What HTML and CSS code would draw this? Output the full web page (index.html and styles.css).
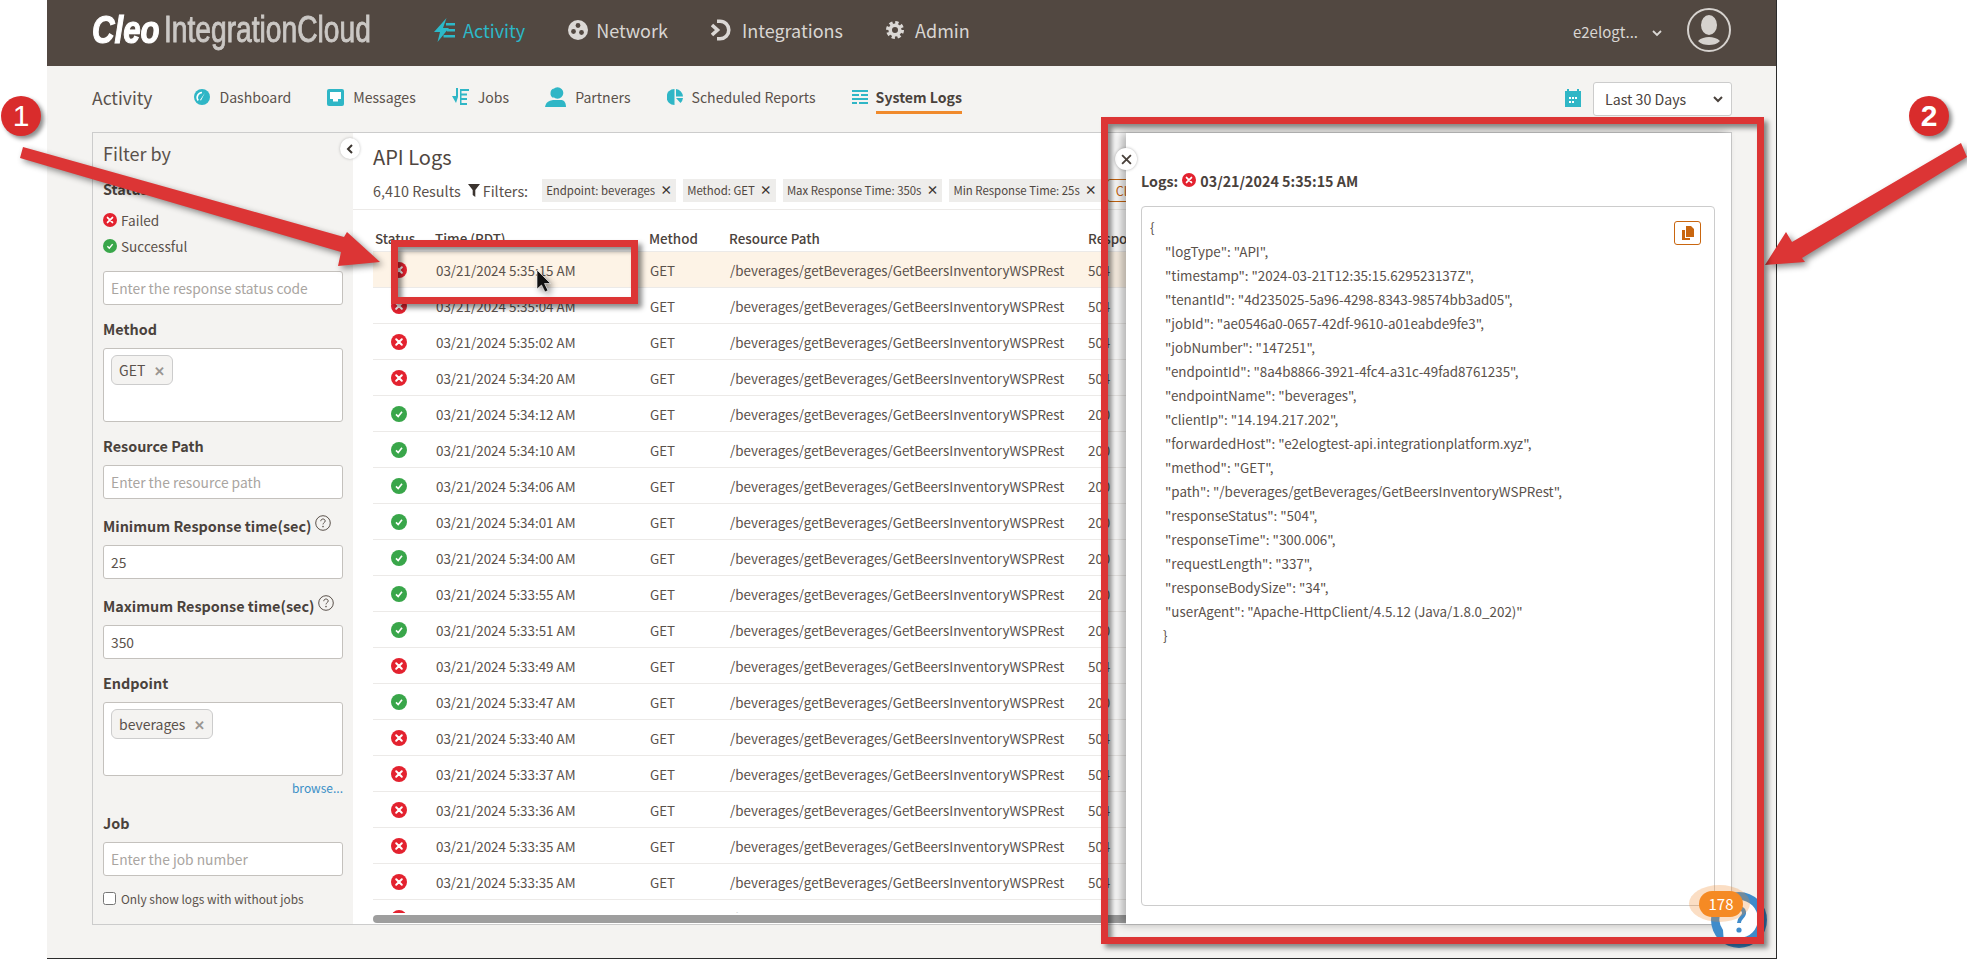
FILE: index.html
```html
<!DOCTYPE html>
<html lang="en">
<head>
<meta charset="utf-8">
<title>Cleo Integration Cloud - System Logs</title>
<link rel="stylesheet" href="styles.css">
</head>
<body>
<svg class="defs" aria-hidden="true">
  <symbol id="i-fail" viewBox="0 0 16 16"><circle cx="8" cy="8" r="8" fill="#e3222f"/><path d="M5.2 5.2l5.6 5.6M10.8 5.2l-5.6 5.6" stroke="#fff" stroke-width="2" stroke-linecap="round"/></symbol>
  <symbol id="i-ok" viewBox="0 0 16 16"><circle cx="8" cy="8" r="8" fill="#39a64a"/><path d="M5 8.4l2.2 2.2L11 5.8" fill="none" stroke="#fff" stroke-width="1.6"/></symbol>
  <symbol id="i-help" viewBox="0 0 16 16"><circle cx="8" cy="8" r="7.3" fill="none" stroke="#5a514b" stroke-width="1"/><path d="M5.8 6.2c0-1.5 1-2.2 2.2-2.2s2.2.8 2.2 2c0 1.6-2.2 1.7-2.2 3.4" fill="none" stroke="#5a514b" stroke-width="1"/><circle cx="8" cy="11.6" r=".8" fill="#5a514b"/></symbol>
</svg>

<div class="page">
  <header class="topbar">
    <div class="logo"><span class="logo-cleo">Cleo</span><span class="logo-ic">IntegrationCloud</span></div>
    <nav class="mainnav">
      <a class="mainnav-item active"><svg width="21" height="24" viewBox="0 0 21 24"><path fill="#2cb9c9" d="M12.500 0L0 14h6L3.500 24 15 10H9z"/><path fill="#2cb9c9" d="M12 5h9v2.400h-9zM13 11h8v2.400h-8zM9.500 17H21v2.400H9.500z"/></svg>Activity</a>
      <a class="mainnav-item"><svg width="20" height="24" viewBox="0 0 20 24"><circle cx="10" cy="12" r="10" fill="#dbd8d5"/><circle cx="10" cy="7.500" r="2.400" fill="#524841"/><circle cx="5.500" cy="13.500" r="2.400" fill="#524841"/><circle cx="13.500" cy="14.500" r="2.400" fill="#524841"/></svg>Network</a>
      <a class="mainnav-item gap-wide"><svg width="20" height="24" viewBox="0 0 20 24" fill="none" stroke="#dbd8d5" stroke-width="3.600"><path d="M1 7l5.500 5L1 17"/><path d="M6 3.200h3a8.800 8.800 0 0 1 0 17.600H6"/></svg>Integrations</a>
      <a class="mainnav-item gap-mid"><svg width="18" height="24" viewBox="0 0 18 24" fill="none" stroke="#dbd8d5"><circle cx="9" cy="12" r="7.500" stroke-width="3" stroke-dasharray="3.300 2.590"/><circle cx="9" cy="12" r="4.800" stroke-width="3.600"/></svg>Admin</a>
    </nav>
    <div class="userbox">
      <span class="username">e2elogt...</span>
      <svg class="chev" width="10" height="7" viewBox="0 0 10 7" fill="none" stroke="#dbd8d5" stroke-width="1.800"><path d="M1 1l4 4 4-4"/></svg>
      <span class="avatar"><svg width="26" height="32" viewBox="0 0 26 32"><ellipse cx="13" cy="11" rx="8" ry="10" fill="#d6d2ce"/><path fill="#d6d2ce" d="M2 27c3-3 7-4 11-4s8 1 11 4c-3 3-7 4-11 4s-8-1-11-4z"/></svg></span>
    </div>
  </header>

  <div class="subnav">
    <span class="subnav-title">Activity</span>
    <a class="subnav-item"><svg width="16" height="18" viewBox="0 0 16 16"><circle cx="8" cy="8" r="8" fill="#2fb6c6"/><path d="M4.200 11.500A5 5 0 0 1 8 3.500" fill="none" stroke="#fff" stroke-width="1.600"/><path d="M10.800 4L7 11.500l-1-.6z" fill="#fff"/></svg>Dashboard</a>
    <a class="subnav-item"><svg width="17" height="17" viewBox="0 0 17 17"><rect width="17" height="17" rx="2" fill="#2fb6c6"/><path fill="#fff" d="M3 3h11v7h-3v2.500H6V10H3z"/></svg>Messages</a>
    <a class="subnav-item"><svg width="17" height="18" viewBox="0 0 17 18" fill="#2fb6c6"><path d="M4 0h2v9l-2 6-4-7h4zM8 1h9v2H9.500v2.500H15v2H9.500V10H15v2H9.500v3H15v2H8z"/></svg>Jobs</a>
    <a class="subnav-item"><svg width="21" height="20" viewBox="0 0 21 20" fill="#2fb6c6"><circle cx="12.500" cy="6" r="5.800"/><path d="M5.500 6a5 5 0 0 1 3-4.500V11a5 5 0 0 1-3-5zM0 20c.5-3 2-5.500 5-6.300l3-.7h9l2 1c1.300 1.300 2 3.500 2 6z"/></svg>Partners</a>
    <a class="subnav-item"><svg width="16" height="18" viewBox="0 0 16 18" fill="#2fb6c6"><path d="M7.500 1A8 8 0 0 0 7.500 17z"/><path d="M9 1a8 8 0 0 1 7 7.500H9zM9 10h7a8 8 0 0 1-2.500 5z"/></svg>Scheduled Reports</a>
    <a class="subnav-item current"><svg width="16" height="15" viewBox="0 0 16 15" fill="#2fb6c6"><path d="M0 0h16v2H0zM0 4h7v2H0zM9 4h7v2H9zM0 8h16v2H0zM0 12h5v2H0zM7 12h9v2H7z"/></svg>System Logs</a>
    <div class="daterange">
      <svg class="cal" width="16" height="18" viewBox="0 0 16 18"><path fill="#2fb6c6" d="M0 2h2V0h2v2h8V0h2v2h2v16H0z"/><path fill="#fff" d="M4 8h2v2H4zM7 8h2v2H7zM10 8h2v2h-2zM4 12h2v2H4zM7 12h2v2H7z"/></svg>
      <div class="select"><span>Last 30 Days</span><svg width="10" height="7" viewBox="0 0 10 7" fill="none" stroke="#4a423c" stroke-width="2"><path d="M1 1l4 4 4-4"/></svg></div>
    </div>
  </div>

  <main class="board">
    <aside class="filters">
      <button class="collapse"><svg width="8" height="10" viewBox="0 0 8 10" fill="none" stroke="#3b342f" stroke-width="2"><path d="M6 1L2 5l4 4"/></svg></button>
      <div class="filters-title">Filter by</div>
      <div class="flabel status-label">Status</div>
      <div class="statusopt first"><svg class="ic14" viewBox="0 0 16 16"><use href="#i-fail"/></svg>Failed</div>
      <div class="statusopt"><svg class="ic14" viewBox="0 0 16 16"><use href="#i-ok"/></svg>Successful</div>
      <input class="finput status-input" placeholder="Enter the response status code">
      <div class="flabel">Method</div>
      <div class="multi"><span class="tag">GET<i class="tag-x">✕</i></span></div>
      <div class="flabel">Resource Path</div>
      <input class="finput" placeholder="Enter the resource path">
      <div class="flabel wide">Minimum Response time(sec)<svg class="helpicon" viewBox="0 0 16 16"><use href="#i-help"/></svg></div>
      <input class="finput" value="25">
      <div class="flabel wide">Maximum Response time(sec)<svg class="helpicon" viewBox="0 0 16 16"><use href="#i-help"/></svg></div>
      <input class="finput" value="350">
      <div class="flabel">Endpoint</div>
      <div class="multi"><span class="tag">beverages<i class="tag-x">✕</i></span></div>
      <a class="browse">browse...</a>
      <div class="flabel wide">Job</div>
      <input class="finput" placeholder="Enter the job number">
      <label class="onlyjobs"><input type="checkbox" class="chk">Only show logs with without jobs</label>
    </aside>

    <section class="content">
      <h1 class="content-title">API Logs</h1>
      <div class="toolbar">
        <span class="results">6,410 Results</span>
        <svg class="funnel" width="12" height="13" viewBox="0 0 12 13"><path fill="#3b342f" d="M0 0h12L7.300 6v7L4.700 11V6z"/></svg>
        <span class="results">Filters:</span>
        <span class="chip">Endpoint: beverages<b>×</b></span>
        <span class="chip">Method: GET<b>×</b></span>
        <span class="chip">Max Response Time: 350s<b>×</b></span>
        <span class="chip">Min Response Time: 25s<b>×</b></span>
        <span class="clear">Clear</span>
      </div>
      <div class="tablewrap">
        <div class="thead">
          <span class="c-status">Status</span><span class="c-time">Time (PDT)</span><span class="c-method">Method</span><span class="c-path">Resource Path</span><span class="c-resp">Response Status</span>
        </div>
        <div class="trow selected"><span class="c-status"><svg class="ic16"><use href="#i-fail"/></svg></span><span class="c-time">03/21/2024 5:35:15 AM</span><span class="c-method">GET</span><span class="c-path">/beverages/getBeverages/GetBeersInventoryWSPRest</span><span class="c-resp">504</span></div>
        <div class="trow"><span class="c-status"><svg class="ic16"><use href="#i-fail"/></svg></span><span class="c-time">03/21/2024 5:35:04 AM</span><span class="c-method">GET</span><span class="c-path">/beverages/getBeverages/GetBeersInventoryWSPRest</span><span class="c-resp">504</span></div>
        <div class="trow"><span class="c-status"><svg class="ic16"><use href="#i-fail"/></svg></span><span class="c-time">03/21/2024 5:35:02 AM</span><span class="c-method">GET</span><span class="c-path">/beverages/getBeverages/GetBeersInventoryWSPRest</span><span class="c-resp">504</span></div>
        <div class="trow"><span class="c-status"><svg class="ic16"><use href="#i-fail"/></svg></span><span class="c-time">03/21/2024 5:34:20 AM</span><span class="c-method">GET</span><span class="c-path">/beverages/getBeverages/GetBeersInventoryWSPRest</span><span class="c-resp">504</span></div>
        <div class="trow"><span class="c-status"><svg class="ic16"><use href="#i-ok"/></svg></span><span class="c-time">03/21/2024 5:34:12 AM</span><span class="c-method">GET</span><span class="c-path">/beverages/getBeverages/GetBeersInventoryWSPRest</span><span class="c-resp">200</span></div>
        <div class="trow"><span class="c-status"><svg class="ic16"><use href="#i-ok"/></svg></span><span class="c-time">03/21/2024 5:34:10 AM</span><span class="c-method">GET</span><span class="c-path">/beverages/getBeverages/GetBeersInventoryWSPRest</span><span class="c-resp">200</span></div>
        <div class="trow"><span class="c-status"><svg class="ic16"><use href="#i-ok"/></svg></span><span class="c-time">03/21/2024 5:34:06 AM</span><span class="c-method">GET</span><span class="c-path">/beverages/getBeverages/GetBeersInventoryWSPRest</span><span class="c-resp">200</span></div>
        <div class="trow"><span class="c-status"><svg class="ic16"><use href="#i-ok"/></svg></span><span class="c-time">03/21/2024 5:34:01 AM</span><span class="c-method">GET</span><span class="c-path">/beverages/getBeverages/GetBeersInventoryWSPRest</span><span class="c-resp">200</span></div>
        <div class="trow"><span class="c-status"><svg class="ic16"><use href="#i-ok"/></svg></span><span class="c-time">03/21/2024 5:34:00 AM</span><span class="c-method">GET</span><span class="c-path">/beverages/getBeverages/GetBeersInventoryWSPRest</span><span class="c-resp">200</span></div>
        <div class="trow"><span class="c-status"><svg class="ic16"><use href="#i-ok"/></svg></span><span class="c-time">03/21/2024 5:33:55 AM</span><span class="c-method">GET</span><span class="c-path">/beverages/getBeverages/GetBeersInventoryWSPRest</span><span class="c-resp">200</span></div>
        <div class="trow"><span class="c-status"><svg class="ic16"><use href="#i-ok"/></svg></span><span class="c-time">03/21/2024 5:33:51 AM</span><span class="c-method">GET</span><span class="c-path">/beverages/getBeverages/GetBeersInventoryWSPRest</span><span class="c-resp">200</span></div>
        <div class="trow"><span class="c-status"><svg class="ic16"><use href="#i-fail"/></svg></span><span class="c-time">03/21/2024 5:33:49 AM</span><span class="c-method">GET</span><span class="c-path">/beverages/getBeverages/GetBeersInventoryWSPRest</span><span class="c-resp">504</span></div>
        <div class="trow"><span class="c-status"><svg class="ic16"><use href="#i-ok"/></svg></span><span class="c-time">03/21/2024 5:33:47 AM</span><span class="c-method">GET</span><span class="c-path">/beverages/getBeverages/GetBeersInventoryWSPRest</span><span class="c-resp">200</span></div>
        <div class="trow"><span class="c-status"><svg class="ic16"><use href="#i-fail"/></svg></span><span class="c-time">03/21/2024 5:33:40 AM</span><span class="c-method">GET</span><span class="c-path">/beverages/getBeverages/GetBeersInventoryWSPRest</span><span class="c-resp">504</span></div>
        <div class="trow"><span class="c-status"><svg class="ic16"><use href="#i-fail"/></svg></span><span class="c-time">03/21/2024 5:33:37 AM</span><span class="c-method">GET</span><span class="c-path">/beverages/getBeverages/GetBeersInventoryWSPRest</span><span class="c-resp">504</span></div>
        <div class="trow"><span class="c-status"><svg class="ic16"><use href="#i-fail"/></svg></span><span class="c-time">03/21/2024 5:33:36 AM</span><span class="c-method">GET</span><span class="c-path">/beverages/getBeverages/GetBeersInventoryWSPRest</span><span class="c-resp">504</span></div>
        <div class="trow"><span class="c-status"><svg class="ic16"><use href="#i-fail"/></svg></span><span class="c-time">03/21/2024 5:33:35 AM</span><span class="c-method">GET</span><span class="c-path">/beverages/getBeverages/GetBeersInventoryWSPRest</span><span class="c-resp">504</span></div>
        <div class="trow"><span class="c-status"><svg class="ic16"><use href="#i-fail"/></svg></span><span class="c-time">03/21/2024 5:33:35 AM</span><span class="c-method">GET</span><span class="c-path">/beverages/getBeverages/GetBeersInventoryWSPRest</span><span class="c-resp">504</span></div>
        <div class="trow"><span class="c-status"><svg class="ic16"><use href="#i-fail"/></svg></span><span class="c-time">03/21/2024 5:33:35 AM</span><span class="c-method">GET</span><span class="c-path">/beverages/getBeverages/GetBeersInventoryWSPRest</span><span class="c-resp">504</span></div>
      </div>
      <div class="hscroll"></div>
    </section>

    <section class="logpanel">
      <button class="closebtn"><svg width="11" height="11" viewBox="0 0 10 10" stroke="#4a423c" stroke-width="1.700"><path d="M1 1l8 8M9 1l-8 8"/></svg></button>
      <div class="logpanel-title">Logs: <svg class="ic14 title-ic" viewBox="0 0 16 16"><use href="#i-fail"/></svg> 03/21/2024 5:35:15 AM</div>
      <div class="jsonbox">
        <button class="copybtn"><svg width="12" height="14" viewBox="0 0 12 14" fill="#c9660f"><path d="M4 0h5l3 3v8H4z"/><path d="M0 4h3v8h5v2H0z"/></svg></button>
        <div class="jl">{</div>
        <div class="jl in">"logType": "API",</div>
        <div class="jl in">"timestamp": "2024-03-21T12:35:15.629523137Z",</div>
        <div class="jl in">"tenantId": "4d235025-5a96-4298-8343-98574bb3ad05",</div>
        <div class="jl in">"jobId": "ae0546a0-0657-42df-9610-a01eabde9fe3",</div>
        <div class="jl in">"jobNumber": "147251",</div>
        <div class="jl in">"endpointId": "8a4b8866-3921-4fc4-a31c-49fad8761235",</div>
        <div class="jl in">"endpointName": "beverages",</div>
        <div class="jl in">"clientIp": "14.194.217.202",</div>
        <div class="jl in">"forwardedHost": "e2elogtest-api.integrationplatform.xyz",</div>
        <div class="jl in">"method": "GET",</div>
        <div class="jl in">"path": "/beverages/getBeverages/GetBeersInventoryWSPRest",</div>
        <div class="jl in">"responseStatus": "504",</div>
        <div class="jl in">"responseTime": "300.006",</div>
        <div class="jl in">"requestLength": "337",</div>
        <div class="jl in">"responseBodySize": "34",</div>
        <div class="jl in">"userAgent": "Apache-HttpClient/4.5.12 (Java/1.8.0_202)"</div>
        <div class="jl close-brace">}</div>
      </div>
    </section>
  </main>
</div>

<div class="helpwidget">
  <svg width="56" height="56" viewBox="0 0 56 56"><circle cx="28" cy="28" r="28" fill="#3f8ccb"/><path fill="#fff" d="M28 8a19 19 0 0 1 0 38H14l-1 6-1-14A19 19 0 0 1 28 8z"/><path d="M23 20c1-4 9-5 10 0 1 5-5 5-5 11" fill="none" stroke="#3f8ccb" stroke-width="4"/><circle cx="28" cy="38" r="2.600" fill="#3f8ccb"/></svg>
</div>
<div class="badge-halo"></div>
<div class="badge">178</div>

<svg class="arrows" width="1967" height="959" viewBox="0 0 1967 959">
  <path fill="#dc3535" d="M23 147L344 237l3-5 33 30-42 4 3-14L20 158z"/>
  <path fill="#dc3535" d="M1961 143L1967 157 1802 258l3 4-40 3 21-33 6 10z"/>
  <path d="M537 270v19l4.500-4 3.500 7 3-1.500-3.500-7h6z" fill="#111" stroke="#fff" stroke-width=".6"/>
</svg>
<div class="mark mark-row"></div>
<div class="mark mark-panel"></div>
<div class="num num-one">1</div>
<div class="num num-two">2</div>
</body>
</html>
```

FILE: styles.css
```css
* { box-sizing: border-box; }
html, body { margin: 0; padding: 0; }
body {
  position: relative;
  width: 1967px;
  height: 959px;
  overflow: hidden;
  background: #fff;
  font-family: "Noto Sans CJK SC", "Noto Sans", sans-serif;
  font-size: 13.4px;
  color: #5a514b;
}
svg { flex: none; }
.defs { position: absolute; width: 0; height: 0; }

.page {
  margin-left: 47px;
  width: 1730px;
  height: 959px;
  background: #f4f3f1;
  border-right: 1px solid #2b2b2b;
  border-bottom: 1px solid #2b2b2b;
  display: flex;
  flex-direction: column;
}

/* top bar */
.topbar {
  height: 66px;
  flex: none;
  background: #524841;
  display: flex;
  align-items: center;
  padding: 0 45px;
}
.logo { width: 342px; display: flex; align-items: center; height: 66px; white-space: nowrap; flex: none; margin-top: -6px; }
.logo-cleo {
  display: inline-block;
  width: 72px;
  transform: scaleX(.8);
  transform-origin: left center;
  font-family: "Liberation Sans", sans-serif;
  font-weight: 700;
  font-style: italic;
  font-size: 39px;
  line-height: 40px;
  color: #fff;
  -webkit-text-stroke: 1.2px #fff;
}
.logo-ic {
  display: inline-block;
  width: 205px;
  transform: scaleX(.762);
  transform-origin: left center;
  font-family: "Liberation Sans", sans-serif;
  font-size: 37px;
  line-height: 40px;
  color: #cbc8c5;
  -webkit-text-stroke: .9px #cbc8c5;
}
.mainnav { display: flex; gap: 43px; margin-top: -6px; }
.mainnav-item {
  display: flex;
  align-items: center;
  gap: 8px;
  font-size: 18px;
  line-height: 28px;
  color: #d9d6d3;
}
.mainnav-item.gap-wide { gap: 11px; }
.mainnav-item.gap-mid { gap: 11px; }
.mainnav-item.active { color: #2cb9c9; }
.userbox { margin-left: auto; display: flex; align-items: center; color: #d9d6d3; }
.username { font-size: 15px; line-height: 22px; margin-top: -3px; }
.chev { margin: 0 0 0 14px; }
.avatar {
  width: 44px;
  height: 44px;
  margin-left: 25px;
  margin-top: -6px;
  border: 2px solid #d6d2ce;
  border-radius: 50%;
  display: flex;
  align-items: center;
  justify-content: center;
}

/* sub nav */
.subnav {
  height: 66px;
  flex: none;
  display: flex;
  align-items: flex-start;
  padding: 16px 44px 0 45px;
  gap: 36px;
}
.subnav-title { font-size: 17.5px; line-height: 32px; margin-right: 6px; }
.subnav-item {
  display: flex;
  align-items: center;
  gap: 9px;
  font-size: 14.1px;
  line-height: 30px;
  height: 30px;
  white-space: nowrap;
}
.subnav-item.current { font-weight: 700; color: #4a423c; position: relative; gap: 8px; }
.subnav-item.current::after {
  content: "";
  position: absolute;
  left: 24px;
  right: 0;
  bottom: -2px;
  height: 3px;
  background: #f08a2c;
}
.daterange { margin-left: auto; display: flex; align-items: center; gap: 12px; }
.cal { margin-top: -2px; }
.select {
  width: 139px;
  height: 34px;
  background: #fff;
  border: 1px solid #ccc;
  border-radius: 3px;
  display: flex;
  align-items: center;
  justify-content: space-between;
  padding: 0 8px 0 11px;
  font-size: 14.2px;
  color: #4a423c;
}

/* main board */
.board {
  position: relative;
  margin: 0 44px 0 45px;
  height: 793px;
  flex: none;
  background: #fff;
  border: 1px solid #ccc;
  display: flex;
}
.filters {
  position: relative;
  width: 260px;
  flex: none;
  background: #f4f3f1;
  padding: 10px 10px 0;
}
.collapse {
  position: absolute;
  top: 5px;
  right: -7px;
  width: 20px;
  height: 21px;
  padding: 0;
  border: 0;
  border-radius: 50%;
  background: #fff;
  box-shadow: 0 0 3px rgba(0,0,0,.25);
  display: flex;
  align-items: center;
  justify-content: center;
  z-index: 2;
}
.filters-title { font-size: 18px; line-height: 20px; }
.flabel {
  display: flex;
  align-items: center;
  font-size: 14.4px;
  font-weight: 700;
  line-height: 20px;
  color: #4a423c;
  margin: 14px 0 9px;
  white-space: nowrap;
}
.flabel.wide { margin-top: 17px; }
.status-label { margin-top: 16px; margin-bottom: 0; }
.statusopt { display: flex; align-items: center; gap: 4px; font-size: 13.6px; line-height: 20px; margin-top: 6px; }
.statusopt.first { margin-top: 11px; }
.ic14 { width: 14px; height: 14px; }
.ic16 { width: 16px; height: 16px; display: block; }
.status-input { margin-top: 15px; }
.finput {
  display: block;
  width: 240px;
  height: 34px;
  background: #fff;
  border: 1px solid #c4c1bd;
  border-radius: 3px;
  padding: 0 7px;
  font: inherit;
  font-size: 13.8px;
  color: #5a514b;
}
.finput::placeholder { color: #a9a5a1; opacity: 1; }
.multi {
  width: 240px;
  height: 74px;
  background: #fff;
  border: 1px solid #c4c1bd;
  border-radius: 3px;
  padding: 6px 7px;
}
.tag {
  display: inline-flex;
  align-items: center;
  height: 30px;
  padding: 0 7px;
  background: #f4f3f1;
  border: 1px solid #ccc;
  border-radius: 6px;
  font-size: 14px;
}
.tag-x { font-style: normal; font-weight: 700; font-size: 13px; color: #9a9691; margin-left: 9px; }
.helpicon { width: 16px; height: 16px; margin: -6px 0 0 4px; }
.browse {
  display: block;
  text-align: right;
  font-size: 12px;
  line-height: 16px;
  margin-top: 4px;
  color: #3a8fc7;
}
.onlyjobs { display: flex; align-items: center; gap: 5px; margin-top: 13px; height: 18px; font-size: 11.9px; }
.chk { width: 13px; height: 13px; margin: 0; flex: none; }

/* content */
.content {
  flex: 1;
  min-width: 0;
  padding-left: 20px;
  display: flex;
  flex-direction: column;
  overflow: hidden;
  height: 791px;
}
.content-title { margin: 10px 0 0; font-size: 20px; line-height: 28px; font-weight: 400; color: #4f4640; }
.toolbar {
  margin: 8px 0 0 0;
  padding-bottom: 8px;
  display: flex;
  align-items: center;
  white-space: nowrap;
  flex: none;
  position: relative;
}
.toolbar::after {
  content: "";
  position: absolute;
  left: -20px;
  right: 0;
  bottom: 0;
  height: 1px;
  background: #eceae8;
}
.results { font-size: 14.4px; line-height: 23px; }
.funnel { margin: 0 3px 0 7px; }
.chip {
  height: 23px;
  margin-left: 7px;
  padding: 0 4px;
  background: #eeedeb;
  font-size: 11.4px;
  line-height: 22px;
  color: #4f4640;
}
.results + .chip { margin-left: 14px; }
.chip b { margin-left: 5px; font-size: 12px; color: #3b342f; }
.clear {
  height: 23px;
  margin-left: 6px;
  padding: 0 8px;
  border: 1px solid #c9660f;
  border-radius: 3px;
  font-size: 12.5px;
  line-height: 21px;
  color: #c9660f;
}
.tablewrap { flex: 1; min-height: 0; overflow: hidden; margin-top: 1px; }
.thead, .trow { display: flex; align-items: center; width: 840px; white-space: nowrap; }
.thead {
  height: 41px;
  padding-top: 14px;
  border-bottom: 1px solid #eceae8;
  font-weight: 500;
  font-size: 13.4px;
  color: #4a423c;
}
.trow { height: 36px; border-bottom: 1px solid #eceae8; font-size: 13.4px; }
.trow.selected { background: #fdf3e6; }
.c-status { width: 62px; padding-left: 18px; flex: none; }
.c-time { width: 214px; padding-left: 1px; flex: none; }
.c-method { width: 80px; padding-left: 1px; flex: none; }
.c-path { width: 359px; padding-left: 1px; flex: none; }
.c-resp { flex: none; }
.thead .c-status { padding-left: 2px; }
.thead .c-time, .thead .c-method, .thead .c-path { padding-left: 0; }
.hscroll { height: 8px; margin: 2px 0 1px; background: #9e9e9e; border-radius: 4px; flex: none; }

/* log panel */
.logpanel {
  position: absolute;
  top: 0;
  right: 0;
  bottom: 0;
  left: 1033px;
  background: #fff;
  box-shadow: -5px 0 9px rgba(0,0,0,.3);
  padding: 38px 16px 18px 15px;
  display: flex;
  flex-direction: column;
  z-index: 3;
}
.closebtn {
  position: absolute;
  left: -11px;
  top: 15px;
  width: 22px;
  height: 22px;
  padding: 0;
  border: 0;
  border-radius: 50%;
  background: #fff;
  box-shadow: 0 0 3px rgba(0,0,0,.3);
  display: flex;
  align-items: center;
  justify-content: center;
}
.logpanel-title { font-size: 14.3px; font-weight: 700; line-height: 20px; color: #4a423c; white-space: nowrap; display: flex; align-items: center; gap: 4px; }
.title-ic { margin-top: -2px; }
.jsonbox {
  position: relative;
  flex: 1;
  margin-top: 15px;
  border: 1px solid #ccc;
  border-radius: 4px;
  padding: 8px;
}
.jl { font-size: 13.4px; line-height: 24px; white-space: nowrap; color: #5a514b; }
.jl.in { padding-left: 15px; }
.jl.close-brace { padding-left: 13px; }
.copybtn {
  position: absolute;
  top: 14px;
  right: 13px;
  width: 27px;
  height: 24px;
  padding: 0;
  background: #fff;
  border: 1px solid #c9660f;
  border-radius: 3px;
  display: flex;
  align-items: center;
  justify-content: center;
}

/* help widget */
.helpwidget { position: absolute; left: 1711px; top: 892px; width: 56px; height: 56px; z-index: 4; }
.badge-halo { position: absolute; left: 1689px; top: 885px; width: 61px; height: 37px; border-radius: 50%; background: rgba(240,138,44,.28); z-index: 5; }
.badge {
  position: absolute;
  left: 1699px;
  top: 891px;
  width: 44px;
  height: 26px;
  border-radius: 13px;
  background: #f58a24;
  color: #fff;
  font-size: 15px;
  line-height: 26px;
  text-align: center;
  z-index: 6;
}

/* annotations */
.arrows {
  position: absolute;
  left: 0;
  top: 0;
  z-index: 8;
  pointer-events: none;
  filter: drop-shadow(3px 3px 3px rgba(0,0,0,.45));
}
.mark {
  position: absolute;
  border: 7px solid #dc3535;
  box-shadow: 4px 4px 5px rgba(0,0,0,.45), inset 4px 4px 5px rgba(0,0,0,.45);
  z-index: 9;
}
.mark-row { left: 391px; top: 240px; width: 247px; height: 64px; }
.mark-panel { left: 1101px; top: 117px; width: 663px; height: 827px; }
.num {
  position: absolute;
  top: 96px;
  width: 40px;
  height: 40px;
  border-radius: 50%;
  background: #d92c2c;
  color: #fff;
  font-family: "Liberation Sans", sans-serif;
  font-size: 30px;
  line-height: 40px;
  text-align: center;
  box-shadow: 3px 3px 4px rgba(0,0,0,.45);
  z-index: 10;
}
.num-one { left: 1px; font-weight: 400; }
.num-two { left: 1909px; font-weight: 700; }
```
